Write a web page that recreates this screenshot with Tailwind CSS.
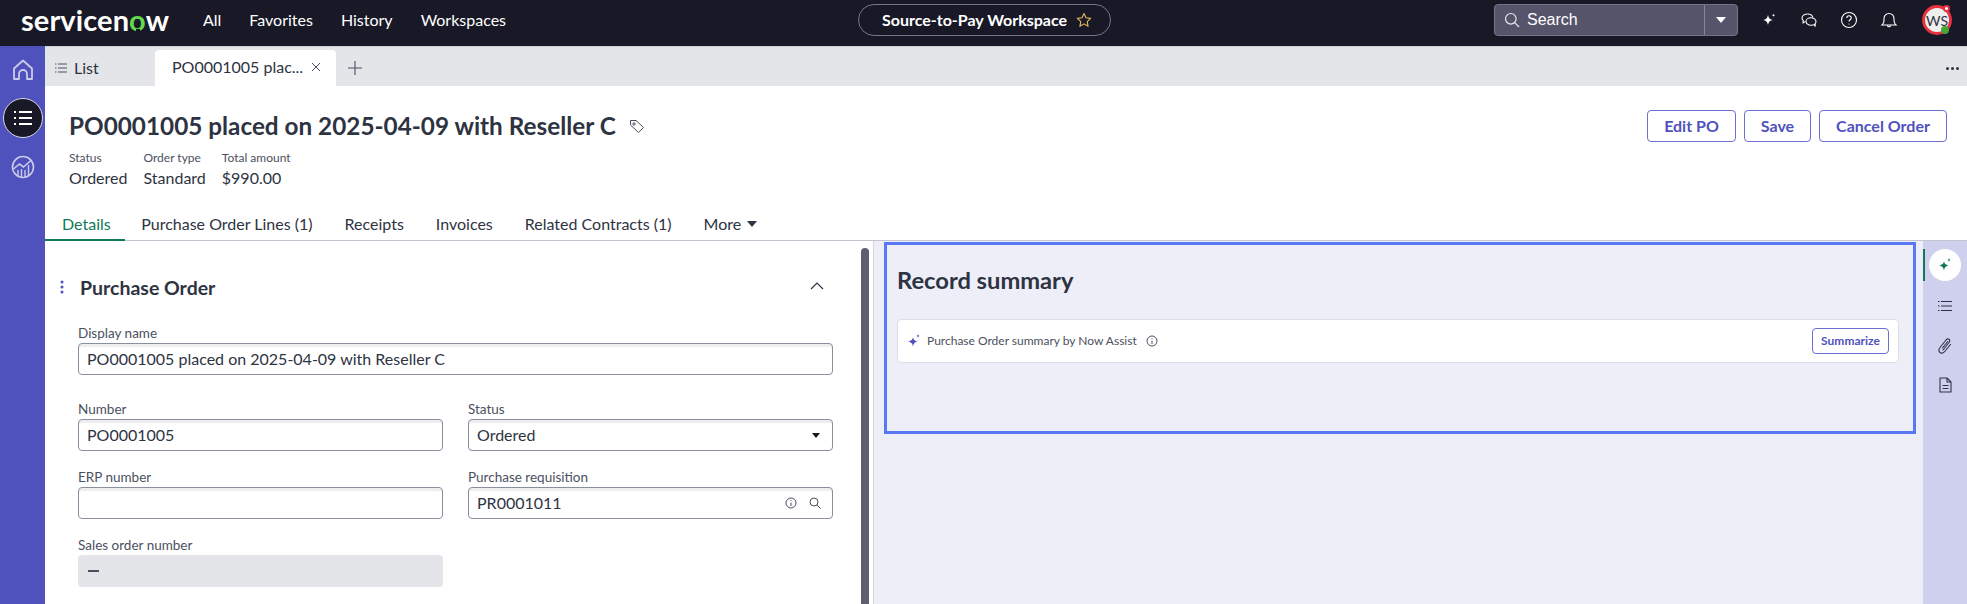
<!DOCTYPE html>
<html lang="en">
<head>
  <meta charset="UTF-8" />
  <title>PO0001005 - Source-to-Pay Workspace</title>
  <script src="https://cdn.jsdelivr.net/npm/@tailwindcss/browser@4"></script>
</head>
<body class="h-[604px] overflow-hidden bg-white font-['Lato',sans-serif] text-[#2e3342]">
  <!-- Top bar -->
  <header class="relative flex h-[46px] items-center bg-[#181826] text-white">
    <div class="mb-[7px] ml-[21px] w-[148px] text-[29px] leading-[36px] font-bold tracking-[0.1px] whitespace-nowrap">servicen<span class="relative inline-block text-[#62d84e]">o<span class="absolute bottom-[5px] left-[6.500px] h-[4px] w-[4px] bg-[#181826]"></span></span>w</div>
    <nav class="mb-[6px] ml-[34px] flex gap-[28px] text-[16px]">
      <span>All</span>
      <span>Favorites</span>
      <span>History</span>
      <span>Workspaces</span>
    </nav>
    <!-- workspace pill sits centered over the bar -->
    <div class="absolute left-[858px] top-[4px] flex h-[32px] w-[253px] items-center rounded-full border border-[#777783] pl-[23px]">
      <span class="text-[16px] font-bold whitespace-nowrap">Source-to-Pay Workspace</span>
      <svg class="ml-[9px]" width="16" height="16" viewBox="0 0 16 16" fill="none" stroke="#e8b95a" stroke-width="1.1" stroke-linejoin="round"><path d="M8 1.500l2 4.300 4.700.6-3.500 3.200.9 4.700L8 11.900l-4.100 2.400.9-4.700L1.300 6.400 6 5.800z"/></svg>
    </div>
    <div class="ml-auto flex items-center">
      <div class="mb-[6px] flex h-[32px] w-[244px] items-center rounded-[4px] border border-[#73738a] bg-[#55546b]">
        <svg class="ml-[9px]" width="16" height="16" viewBox="0 0 16 16" fill="none" stroke="#e8e8ee" stroke-width="1.2"><circle cx="6.800" cy="6.800" r="5.300"/><path d="M10.700 10.700l4.300 4.300"/></svg>
        <span class="ml-[7px] flex-1 font-['Liberation_Sans',sans-serif] text-[16px]">Search</span>
        <div class="flex h-full w-[33px] items-center justify-center border-l border-[#85859a]">
          <div class="h-0 w-0 border-x-[5px] border-t-[6px] border-x-transparent border-t-white"></div>
        </div>
      </div>
      <div class="mb-[6px] ml-[22px] flex items-center gap-[22px]">
        <svg width="18" height="18" viewBox="0 0 18 18" fill="#fff"><path d="M8 4c.6 3 1.800 4.400 5 5-3.200.6-4.400 2-5 5-.6-3-1.800-4.400-5-5 3.200-.6 4.400-2 5-5z"/><path d="M13.500 2.500c.2 1.100.6 1.600 1.700 1.800-1.100.2-1.500.6-1.700 1.700-.2-1.100-.6-1.500-1.700-1.700 1.100-.2 1.500-.7 1.700-1.800z"/></svg>
        <svg width="18" height="18" viewBox="0 0 18 18" fill="none" stroke="#fff" stroke-width="1.100"><path d="M7.500 3C4.500 3 2 4.800 2 7c0 1 .5 1.900 1.300 2.600L3 11.800l2.300-1.100"/><path d="M7.500 3c2.700 0 5 1.500 5.400 3.400"/><ellipse cx="11" cy="10.500" rx="5" ry="3.800"/><path d="M14 13.500l1.300 2-.2-2.800"/></svg>
        <svg width="18" height="18" viewBox="0 0 18 18" fill="none" stroke="#fff" stroke-width="1.100"><circle cx="9" cy="9" r="7.500"/><path d="M6.800 7c0-1.300 1-2.200 2.200-2.200s2.200.9 2.200 2.100c0 1.800-2.200 1.900-2.200 3.700"/><circle cx="9" cy="13" r=".6" fill="#fff" stroke="none"/></svg>
        <svg width="18" height="18" viewBox="0 0 18 18" fill="none" stroke="#fff" stroke-width="1.100"><path d="M2 14c1.500-1.200 2-2.500 2-4.500V7.500a5 5 0 0 1 10 0v2c0 2 .5 3.300 2 4.500z"/><path d="M7.300 14.500a1.800 1.800 0 0 0 3.400 0"/></svg>
      </div>
      <!-- avatar -->
      <div class="relative mb-[6px] ml-[24px] mr-[15px] flex h-[30px] w-[30px] items-center justify-center rounded-full border-[3px] border-[#e8303f] bg-[#eeeeee] text-[14px] text-[#2e3342]">
        WS
        <div class="absolute -right-[1px] -top-[3px] h-[7px] w-[7px] rounded-full border-2 border-[#e8303f] bg-white"></div>
        <div class="absolute -bottom-[2px] right-[0px] h-[8px] w-[8px] rounded-full bg-[#45a537]"></div>
      </div>
    </div>
  </header>

  <div class="flex h-[558px]">
    <!-- Left rail -->
    <aside class="flex w-[45px] shrink-0 flex-col items-center bg-[#4f52bd]">
      <svg class="mt-[12px]" width="22" height="24" viewBox="0 0 22 24" fill="none" stroke="#c9cbe8" stroke-width="1.800" stroke-linejoin="round"><path d="M2 21V10.500L11 2.500l9 8V21h-5v-5a4 4 0 0 0-8 0v5z"/></svg>
      <div class="mt-[16px] flex h-[40px] w-[40px] items-center justify-center rounded-full border border-[#d8d8e8] bg-[#181826]">
        <svg width="20" height="16" viewBox="0 0 20 16" stroke="#fff" stroke-width="1.800"><path d="M1 2h2M6 2h13M1 8h2M6 8h13M1 14h2M6 14h13"/></svg>
      </div>
      <svg class="mt-[17px]" width="24" height="24" viewBox="0 0 24 24" fill="none" stroke="#c9cbe8" stroke-width="1.600"><circle cx="12" cy="12" r="10.500"/><path d="M2.500 14l6-5 4 3 8-7"/><path d="M7 21v-6M10.500 22v-8M14 22v-7M17.500 21V10" stroke-width="1.400"/></svg>
    </aside>

    <main class="flex min-w-0 flex-1 flex-col">
      <!-- Tab bar -->
      <div class="flex h-[40px] shrink-0 items-end border-t border-[#cfd1d8] bg-[#e4e5e9]">
        <div class="flex h-[35px] w-[110px] items-center pl-[10px] pb-[2px]">
          <svg width="12" height="10" viewBox="0 0 12 10" stroke="#4b5060" stroke-width="1"><path d="M0 1h1.500M3 1h9M0 5h1.500M3 5h9M0 9h1.500M3 9h9"/></svg>
          <span class="ml-[7px] text-[16px] text-[#2e3342]">List</span>
        </div>
        <div class="flex h-[36px] w-[181px] items-center rounded-t-[4px] bg-white pb-[2px] pl-[17px] text-[16px] whitespace-nowrap">
          <span class="w-[133px]">PO0001005 plac...</span>
          <svg class="ml-[6px]" width="10" height="10" viewBox="0 0 10 10" stroke="#4b5060" stroke-width="1"><path d="M1 1l8 8M9 1l-8 8"/></svg>
        </div>
        <svg class="mb-[11px] ml-[12px]" width="14" height="14" viewBox="0 0 14 14" stroke="#4b5060" stroke-width="1.100"><path d="M7 0v14M0 7h14"/></svg>
        <div class="mb-[16px] ml-auto mr-[8px] flex gap-[2px]">
          <div class="h-[3px] w-[3px] rounded-full bg-[#2e3342]"></div>
          <div class="h-[3px] w-[3px] rounded-full bg-[#2e3342]"></div>
          <div class="h-[3px] w-[3px] rounded-full bg-[#2e3342]"></div>
        </div>
      </div>

      <!-- Record header -->
      <section class="shrink-0 border-b border-[#c2c5cf]">
        <div class="flex items-start justify-between pl-[24px] pr-[20px] pt-[24px]">
          <div>
            <div class="flex h-[32px] items-center">
              <h1 class="text-[24.300px] font-bold whitespace-nowrap">PO0001005 placed on 2025-04-09 with Reseller C</h1>
              <svg class="ml-[13px]" width="16" height="16" viewBox="0 0 16 16" fill="none" stroke="#4b5060" stroke-width="1"><path d="M1.500 2.500h5.500l7.500 7-5 5-8-7.500z" stroke-linejoin="round"/><circle cx="5" cy="6" r="1.200"/></svg>
            </div>
            <div class="mt-[8px] flex gap-4">
              <div>
                <div class="text-[12px] leading-4 text-[#4b5060]">Status</div>
                <div class="text-[16px] leading-6">Ordered</div>
              </div>
              <div>
                <div class="text-[12px] leading-4 text-[#4b5060]">Order type</div>
                <div class="text-[16px] leading-6">Standard</div>
              </div>
              <div>
                <div class="text-[12px] leading-4 text-[#4b5060]">Total amount</div>
                <div class="text-[16px] leading-6">$990.00</div>
              </div>
            </div>
          </div>
          <div class="flex gap-2 text-[16px] font-bold text-[#4f52bd]">
            <button class="h-[32px] w-[89px] rounded-[4px] border border-[#6b70d6]">Edit PO</button>
            <button class="h-[32px] w-[67px] rounded-[4px] border border-[#6b70d6]">Save</button>
            <button class="h-[32px] w-[128px] rounded-[4px] border border-[#6b70d6]">Cancel Order</button>
          </div>
        </div>
        <!-- Record tabs -->
        <div class="mt-[14px] flex h-[36px] text-[16px]">
          <div class="-mb-[1px] flex h-[37px] items-center border-b-2 border-[#0f7a5a] pl-[17px] pr-[14.500px] pt-[4px] text-[#0f7a5a]">Details</div>
          <div class="flex items-center px-4 pt-[3px]">Purchase Order Lines (1)</div>
          <div class="flex items-center px-4 pt-[3px]">Receipts</div>
          <div class="flex items-center px-4 pt-[3px]">Invoices</div>
          <div class="flex items-center px-4 pt-[3px]">Related Contracts (1)</div>
          <div class="flex items-center px-4 pt-[3px]">More
            <div class="ml-[6px] h-0 w-0 border-x-[5px] border-t-[6px] border-x-transparent border-t-[#2e3342]"></div>
          </div>
        </div>
      </section>

      <div class="flex min-h-0 flex-1">
        <!-- Form column -->
        <section class="flex w-[828px] shrink-0 overflow-hidden">
          <div class="w-[816px] shrink-0 pl-[33px]">
            <div class="-ml-[18px] flex h-[24px] mt-[35px] items-center justify-between">
              <div class="flex items-center">
                <svg class="mr-[16px] mb-[2px]" width="4" height="14" viewBox="0 0 4 14" fill="#4f52bd"><circle cx="2" cy="2" r="1.500"/><circle cx="2" cy="7" r="1.500"/><circle cx="2" cy="12" r="1.500"/></svg>
                <h2 class="text-[19.500px] font-bold">Purchase Order</h2>
              </div>
              <svg class="mr-[37px] mb-[4px]" width="14" height="8" viewBox="0 0 14 8" fill="none" stroke="#2e3342" stroke-width="1.200"><path d="M1 7l6-6 6 6"/></svg>
            </div>
            <div class="mt-[25px] grid grid-cols-[365px_365px] gap-x-[25px] gap-y-[18px]">
              <div class="col-span-2 mb-[8px]">
                <label class="mb-[2px] block text-[13.500px] leading-4 text-[#4b5060]">Display name</label>
                <div class="flex h-[32px] items-center rounded-[4px] border border-[#8a8fa0] pl-[8px] text-[16px] shadow-[inset_0_3px_0_#eeeeef]">PO0001005 placed on 2025-04-09 with Reseller C</div>
              </div>
              <div>
                <label class="mb-[2px] block text-[13.500px] leading-4 text-[#4b5060]">Number</label>
                <div class="flex h-[32px] items-center rounded-[4px] border border-[#8a8fa0] pl-[8px] text-[16px] shadow-[inset_0_3px_0_#eeeeef]">PO0001005</div>
              </div>
              <div>
                <label class="mb-[2px] block text-[13.500px] leading-4 text-[#4b5060]">Status</label>
                <div class="flex h-[32px] items-center justify-between rounded-[4px] border border-[#8a8fa0] pl-[8px] pr-[12px] text-[16px] shadow-[inset_0_3px_0_#eeeeef]">
                  Ordered
                  <div class="h-0 w-0 border-x-[4.500px] border-t-[5px] border-x-transparent border-t-[#181826]"></div>
                </div>
              </div>
              <div>
                <label class="mb-[2px] block text-[13.500px] leading-4 text-[#4b5060]">ERP number</label>
                <div class="h-[32px] rounded-[4px] border border-[#8a8fa0] shadow-[inset_0_3px_0_#eeeeef]"></div>
              </div>
              <div>
                <label class="mb-[2px] block text-[13.500px] leading-4 text-[#4b5060]">Purchase requisition</label>
                <div class="flex h-[32px] items-center rounded-[4px] border border-[#8a8fa0] pl-[8px] pr-[11px] text-[16px] shadow-[inset_0_3px_0_#eeeeef]">
                  <span class="flex-1">PR0001011</span>
                  <svg width="12" height="12" viewBox="0 0 12 12" fill="none" stroke="#4b5060" stroke-width="1"><circle cx="6" cy="6" r="5"/><path d="M6 5.500V9"/><circle cx="6" cy="3.500" r=".6" fill="#4b5060" stroke="none"/></svg>
                  <svg class="ml-[12px]" width="12" height="12" viewBox="0 0 12 12" fill="none" stroke="#4b5060" stroke-width="1"><circle cx="5" cy="5" r="4"/><path d="M8 8l3.500 3.500"/></svg>
                </div>
              </div>
              <div>
                <label class="mb-[2px] block text-[13.500px] leading-4 text-[#4b5060]">Sales order number</label>
                <div class="flex h-[32px] items-center rounded-[4px] bg-[#e4e5e9] pl-[10px]">
                  <div class="h-[1.500px] w-[11px] bg-[#4b5060]"></div>
                </div>
              </div>
            </div>
          </div>
          <!-- scrollbar -->
          <div class="mt-[7px] h-full w-[8px] shrink-0 rounded-t-[4px] bg-[#5f5f72]"></div>
        </section>

        <!-- Summary column -->
        <section class="flex-1 border-l border-[#d5d6e2] bg-[#edeef8] pl-[10px] pt-[1px]">
          <div class="h-[192px] w-[1032px] border-[3px] border-[#5a78f5] pl-[10px] pr-[14px] pt-[19px]">
            <h2 class="text-[23.700px] leading-8 font-bold">Record summary</h2>
            <div class="mt-[23px] flex h-[44px] items-center rounded-[4px] border border-[#dcdde6] bg-white pl-[9px] pr-[9px]">
              <svg width="14" height="14" viewBox="0 0 14 14" fill="#4f52bd"><path d="M6 3c.4 2.600 1.400 3.600 4.500 4.500C7.400 8.400 6.400 9.400 6 13 5.600 9.400 4.600 8.400 1 7.500 4.600 6.600 5.600 5.600 6 3z"/><path d="M11 0c.2 1.300.5 1.700 1.700 2-1.200.3-1.500.7-1.700 2-.2-1.300-.5-1.700-1.700-2 1.200-.3 1.500-.7 1.700-2z"/></svg>
              <span class="ml-[6px] text-[12px] text-[#4b5060]">Purchase Order summary by Now Assist</span>
              <svg class="ml-[9px]" width="12" height="12" viewBox="0 0 12 12" fill="none" stroke="#4b5060" stroke-width="1"><circle cx="6" cy="6" r="5"/><path d="M6 5.500V9"/><circle cx="6" cy="3.500" r=".6" fill="#4b5060" stroke="none"/></svg>
              <button class="ml-auto h-[26px] w-[77px] rounded-[4px] border border-[#6b70d6] text-[12px] font-bold text-[#4f52bd]">Summarize</button>
            </div>
          </div>
        </section>

        <!-- Right rail -->
        <aside class="flex w-[44px] shrink-0 flex-col items-center bg-[#cfd0ee] pt-[8px]">
          <div class="relative flex h-[32px] w-[32px] items-center justify-center rounded-full bg-white">
            <div class="absolute -left-[6px] top-0 h-[32px] w-[2px] bg-[#0f7a5a]"></div>
            <svg width="14" height="14" viewBox="0 0 14 14" fill="#0f7a5a"><path d="M6 3c.4 2.600 1.400 3.600 4.500 4.500C7.400 8.400 6.400 9.400 6 13 5.600 9.400 4.600 8.400 1 7.500 4.600 6.600 5.600 5.600 6 3z"/><path d="M11 0c.2 1.300.5 1.700 1.700 2-1.200.3-1.500.7-1.700 2-.2-1.300-.5-1.700-1.700-2 1.200-.3 1.500-.7 1.700-2z"/></svg>
          </div>
          <svg class="mt-[20px]" width="14" height="10" viewBox="0 0 14 10" stroke="#2e3342" stroke-width="1"><path d="M0 .5h1.500M3 .5h11M0 5h1.500M3 5h11M0 9.500h1.500M3 9.500h11"/></svg>
          <svg class="mt-[27px]" width="14" height="16" viewBox="0 0 14 16" fill="none" stroke="#2e3342" stroke-width="1.100" stroke-linecap="round"><path d="M5 12l6-7.500c1-1.300.9-2.500 0-3.200s-2-.5-3 .7L2 9.500c-1.500 2-1.300 3.900 0 5s3.200.8 4.700-1l5.800-7"/><path d="M4.500 10l5.200-6.500"/></svg>
          <svg class="mt-[23px]" width="13" height="16" viewBox="0 0 13 16" fill="none" stroke="#2e3342" stroke-width="1.100" stroke-linejoin="round"><path d="M1 1h7l4 4v10H1z"/><path d="M8 1v4h4M3.500 8.500h6M3.500 11.500h6"/></svg>
        </aside>
      </div>
    </main>
  </div>
</body>
</html>
